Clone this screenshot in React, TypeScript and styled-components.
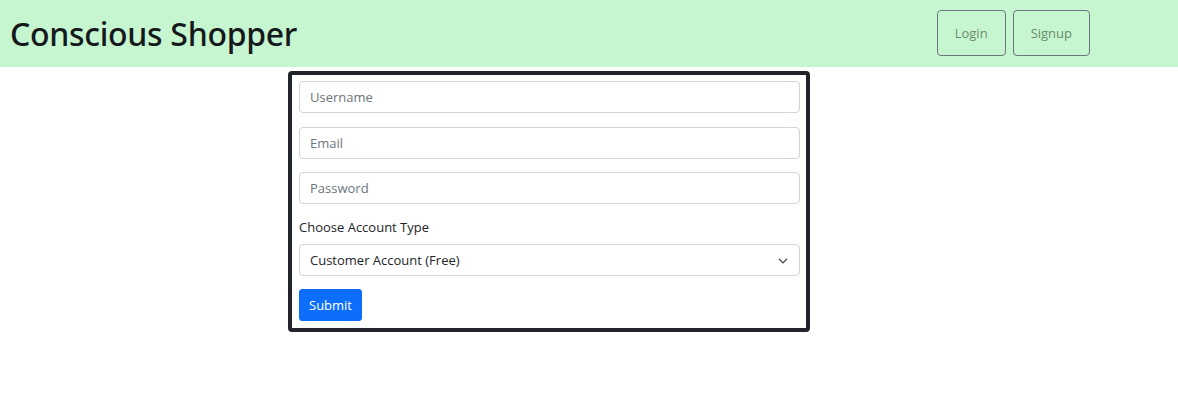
import * as React from 'react'
import styled, { createGlobalStyle } from 'styled-components'

const GlobalStyle = createGlobalStyle`
  body {
    margin: 0;
    background: #ffffff;
    font-family: "Open Sans", "Noto Sans", sans-serif;
    color: #212529;
  }
  * { box-sizing: border-box; }
`

function App() {
  return (
    <>
      <GlobalStyle />
      <Header>
        <Brand>Conscious Shopper</Brand>
        <Nav>
          <NavButton>Login</NavButton>
          <NavButton>Signup</NavButton>
        </Nav>
      </Header>
      <Main>
        <FormBox>
          <Input placeholder="Username" />
          <Input placeholder="Email" />
          <Input placeholder="Password" type="password" />
          <Label>Choose Account Type</Label>
          <SelectWrap>
            <Select defaultValue="customer">
              <option value="customer">Customer Account (Free)</option>
              <option value="business">Business Account</option>
            </Select>
            <Chevron viewBox="0 0 16 16">
              <path d="M2 5l6 6 6-6" fill="none" stroke="#343a40" strokeWidth="2" strokeLinecap="round" strokeLinejoin="round" />
            </Chevron>
          </SelectWrap>
          <SubmitButton>Submit</SubmitButton>
        </FormBox>
      </Main>
    </>
  )
}

const Header = styled.header`
  display: flex;
  align-items: center;
  justify-content: space-between;
  height: 67px;
  background: #c6f6cf;
  padding: 0 88px 0 10px;
`

const Brand = styled.h1`
  margin: 0 0 1px;
  font-family: "Noto Sans", "Open Sans", sans-serif;
  font-size: 32px;
  font-weight: 500;
  color: #15191c;
  letter-spacing: -0.3px;
`

const Nav = styled.div`
  display: flex;
  gap: 7px;
  margin-top: -1px;
`

const NavButton = styled.button`
  font-family: inherit;
  font-size: 13px;
  color: #6c8a6e;
  background: transparent;
  border: 1px solid #6c757d;
  border-radius: 4px;
  height: 46px;
  padding: 0 17px;
`

const Main = styled.main`
  padding: 4px 0 0 288px;
`

const FormBox = styled.form`
  width: 522px;
  border: 4px solid #212529;
  border-radius: 4px;
  padding: 6px 6px 7px 7px;
  display: flex;
  flex-direction: column;
  align-items: flex-start;
`

const Input = styled.input`
  width: 100%;
  height: 32px;
  margin-bottom: 13.5px;
  padding: 0 10px;
  font-family: inherit;
  font-size: 13px;
  color: #212529;
  border: 1px solid #ced4da;
  border-radius: 4px;
  outline: none;
  &::placeholder { color: #6c757d; }
`

const Label = styled.label`
  font-size: 13px;
  color: #212529;
  margin: -1px 0 7px;
  line-height: 20px;
`

const SelectWrap = styled.div`
  position: relative;
  width: 100%;
  margin-bottom: 13px;
`

const Select = styled.select`
  appearance: none;
  width: 100%;
  height: 32px;
  padding: 0 10px;
  font-family: inherit;
  font-size: 13px;
  color: #212529;
  background: #fff;
  border: 1px solid #ced4da;
  border-radius: 4px;
  outline: none;
`

const Chevron = styled.svg`
  position: absolute;
  right: 12px;
  top: 12px;
  width: 10px;
  height: 10px;
  pointer-events: none;
`

const SubmitButton = styled.button`
  font-family: inherit;
  font-size: 13px;
  color: #fff;
  background: #0d6efd;
  border: 1px solid #0d6efd;
  border-radius: 3px;
  height: 32px;
  padding: 0 9px;
`

export default App
